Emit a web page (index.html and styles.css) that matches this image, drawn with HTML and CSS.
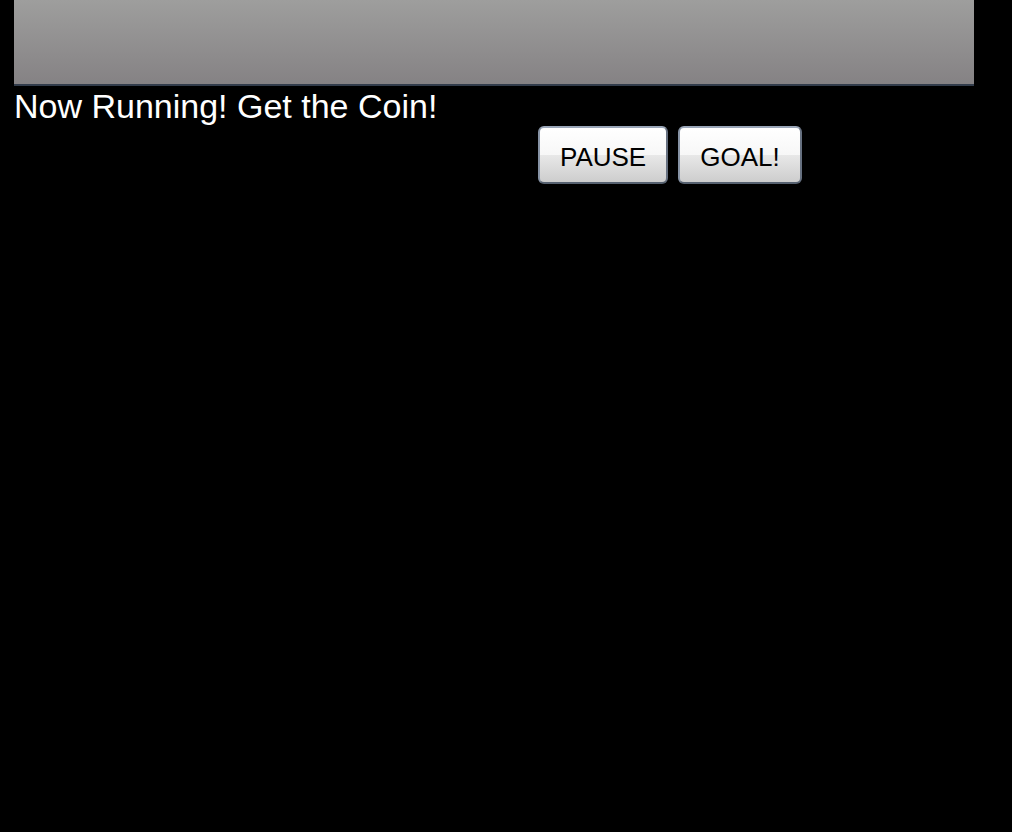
FILE: index.html
```html
<!DOCTYPE html>
<html lang="en">
<head>
<meta charset="utf-8">
<title>Get the Coin</title>
<link rel="stylesheet" href="styles.css">
</head>
<body>
<main class="game">
  <div class="stage"></div>
  <p class="status">Now Running! Get the Coin!</p>
  <div class="controls">
    <button class="button" type="button">PAUSE</button>
    <button class="button" type="button">GOAL!</button>
  </div>
</main>
</body>
</html>
```

FILE: styles.css
```css
body {
  margin: 0;
  background: #000;
  color: #fff;
  font-family: "Liberation Sans", Arial, sans-serif;
}

.game {
  padding: 0 38px 0 14px;
}

.stage {
  box-sizing: border-box;
  height: 86px;
  border-bottom: 2px solid #323c4b;
  background: linear-gradient(#9e9e9d, #858284);
}

.status {
  margin: 0;
  font-size: 34px;
  line-height: 40px;
}

.controls {
  display: flex;
  gap: 10px;
  padding-left: 524px;
}

.button {
  height: 58px;
  padding: 4px 20px 0;
  border: 2px solid;
  border-color: #9aa6b8 #667080 #566170 #8793a5;
  border-radius: 6px;
  background: linear-gradient(#fff, #f7f7f7 50%, #e8e8e8 50%, #cdcdcd);
  color: #000;
  font-family: inherit;
  font-size: 26px;
  white-space: nowrap;
}
```
